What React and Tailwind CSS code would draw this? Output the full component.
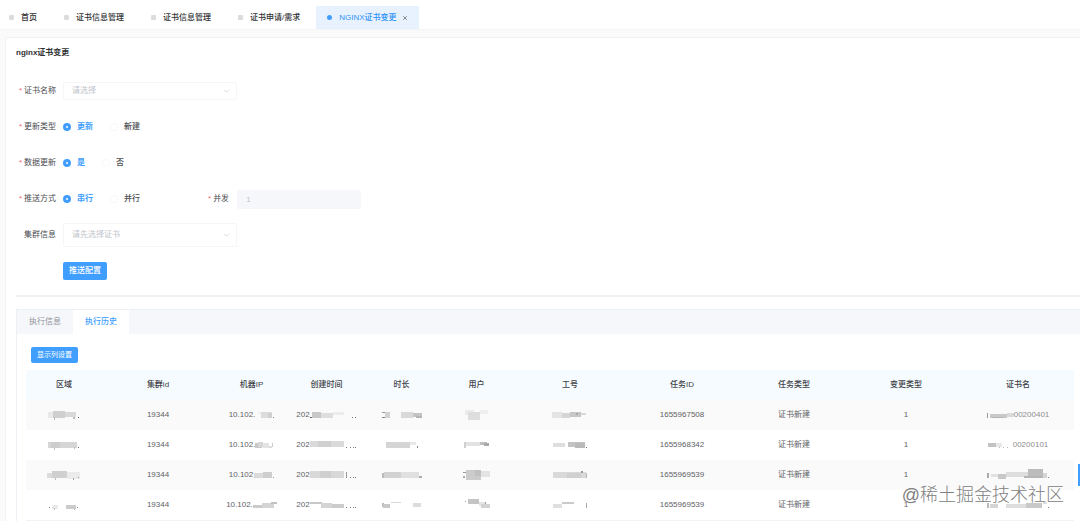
import React, { useState } from 'react';
import clsx from 'clsx';
import { ChevronDown, X } from 'lucide-react';

const pageTabs = [
  { id: 1, title: '首页' },
  { id: 2, title: '证书信息管理' },
  { id: 3, title: '证书信息管理' },
  { id: 4, title: '证书申请/需求' },
  { id: 5, title: 'NGINX证书变更' },
];

const columns = [
  { key: 'region', title: '区域', width: 'w-[76px]' },
  { key: 'clusterId', title: '集群id' },
  { key: 'ip', title: '机器IP', width: 'w-[75px]' },
  { key: 'createdAt', title: '创建时间', width: 'w-[75px]' },
  { key: 'duration', title: '时长', width: 'w-[75px]' },
  { key: 'user', title: '用户', width: 'w-[75px]' },
  { key: 'jobNo', title: '工号' },
  { key: 'taskId', title: '任务ID' },
  { key: 'taskType', title: '任务类型' },
  { key: 'changeType', title: '变更类型' },
  { key: 'certName', title: '证书名' },
];

// masked cells: each block is [x, y, width, height, fill]
const rows = [
  {
    region: { w: 32, blocks: [[0, 3, 5, 6, '#e9e9e9'], [5, 2, 12, 7, '#cfcfcf'], [17, 3, 11, 5, '#d8d8d8'], [6, 8, 1, 3, '#bbb'], [25, 8, 2, 2, '#bbb'], [30, 8, 1, 1, '#666']] },
    clusterId: '19344',
    ip: { text: '10.102.', w: 19, blocks: [[3, 3, 3, 2, '#eee'], [6, 3, 11, 6, '#dcdcdc'], [13, 4, 4, 5, '#d0d0d0'], [18, 8, 1, 1, '#888']] },
    createdAt: { text: '202', w: 47, blocks: [[0, 8, 3, 1, '#666'], [2, 3, 9, 6, '#c8c8c8'], [11, 4, 12, 5, '#dedede'], [23, 3, 11, 3, '#ececec'], [42, 8, 1, 1, '#777'], [45, 8, 1, 1, '#777']] },
    duration: { w: 40, blocks: [[0, 3, 3, 1, '#999'], [0, 8, 5, 1, '#888'], [3, 3, 5, 6, '#d2d2d2'], [19, 3, 12, 6, '#d9d9d9'], [31, 4, 9, 4, '#c4c4c4'], [34, 7, 6, 2, '#b5b5b5']] },
    user: { w: 28, blocks: [[2, 1, 9, 5, '#ebebeb'], [5, 3, 12, 8, '#dedede'], [17, 1, 8, 4, '#efefef']] },
    jobNo: { w: 36, blocks: [[0, 3, 10, 6, '#e4e4e4'], [10, 4, 8, 5, '#d5d5d5'], [18, 3, 11, 5, '#c6c6c6'], [24, 4, 2, 2, '#aaa'], [29, 4, 5, 2, '#d8d8d8']] },
    taskId: '1655967508',
    certName: { w: 27, blocks: [[0, 4, 1, 5, '#999'], [3, 5, 17, 4, '#c9c9c9'], [5, 8, 12, 1, '#b5b5b5'], [20, 4, 7, 4, '#dadada']], tail: '00200401' },
  },
  {
    region: { w: 32, blocks: [[0, 3, 29, 6, '#d6d6d6'], [3, 3, 9, 6, '#cdcdcd'], [6, 9, 1, 2, '#bbb'], [26, 8, 1, 2, '#bbb'], [30, 8, 1, 1, '#666']] },
    clusterId: '19344',
    ip: { text: '10.102.', w: 19, blocks: [[0, 4, 7, 5, '#c8c8c8'], [3, 3, 5, 5, '#d6d6d6'], [8, 4, 6, 5, '#e4e4e4'], [14, 7, 3, 2, '#ddd'], [17, 4, 1, 4, '#ccc']] },
    createdAt: { text: '202', w: 47, blocks: [[0, 2, 34, 6, '#dadada'], [8, 2, 13, 6, '#d0d0d0'], [36, 8, 1, 1, '#777'], [40, 8, 1, 1, '#777'], [43, 8, 1, 1, '#777'], [45, 8, 1, 1, '#777']] },
    duration: { w: 32, blocks: [[0, 3, 24, 6, '#d5d5d5'], [24, 3, 6, 3, '#e8e8e8'], [31, 7, 1, 2, '#888']] },
    user: { w: 28, blocks: [[1, 3, 2, 6, '#d0d0d0'], [3, 3, 14, 4, '#e2e2e2'], [17, 3, 7, 3, '#bdbdbd'], [21, 4, 5, 3, '#a8a8a8']] },
    jobNo: { w: 35, blocks: [[0, 4, 12, 4, '#dedede'], [15, 3, 17, 5, '#c4c4c4'], [22, 4, 10, 5, '#bababa'], [33, 8, 1, 1, '#777']] },
    taskId: '1655968342',
    certName: { w: 25, blocks: [[0, 4, 8, 4, '#c2c2c2'], [8, 4, 6, 4, '#e8e8e8'], [11, 8, 1, 1, '#bbb'], [15, 8, 1, 1, '#bbb'], [19, 8, 1, 1, '#bbb']], tail: '00200101' },
  },
  {
    region: { w: 34, blocks: [[0, 4, 7, 5, '#dcdcdc'], [5, 2, 15, 7, '#d0d0d0'], [20, 3, 13, 7, '#ebebeb'], [8, 9, 1, 2, '#bbb'], [26, 9, 1, 2, '#aaa'], [31, 8, 1, 1, '#999']] },
    clusterId: '19344',
    ip: { text: '10.102', w: 21, blocks: [[1, 4, 12, 5, '#dadada'], [10, 3, 9, 6, '#cecece'], [20, 8, 1, 1, '#999']] },
    createdAt: { text: '202', w: 47, blocks: [[0, 2, 34, 7, '#d8d8d8'], [10, 2, 11, 7, '#cfcfcf'], [36, 3, 1, 6, '#999'], [40, 8, 1, 1, '#777'], [43, 8, 1, 1, '#777'], [45, 8, 1, 1, '#777']] },
    duration: { w: 40, blocks: [[0, 4, 2, 5, '#bbb'], [2, 3, 17, 6, '#d2d2d2'], [19, 3, 18, 6, '#e0e0e0'], [37, 7, 3, 2, '#aaa']] },
    user: { w: 28, blocks: [[0, 3, 3, 1, '#999'], [0, 7, 2, 2, '#aaa'], [3, 1, 15, 10, '#cbcbcb'], [12, 1, 6, 6, '#c0c0c0'], [18, 2, 9, 6, '#e3e3e3']] },
    jobNo: { w: 35, blocks: [[0, 3, 33, 6, '#d9d9d9'], [14, 4, 14, 5, '#d0d0d0'], [28, 2, 2, 2, '#999'], [33, 4, 1, 5, '#bbb']] },
    taskId: '1655969539',
    certName: { w: 62, blocks: [[0, 4, 2, 5, '#aaa'], [4, 5, 7, 3, '#e2e2e2'], [11, 5, 8, 5, '#c8c8c8'], [19, 3, 22, 5, '#dddddd'], [41, 0, 15, 7, '#bcbcbc'], [37, 7, 19, 2, '#b5b5b5'], [56, 4, 4, 5, '#d5d5d5'], [61, 8, 1, 1, '#888']] },
  },
  {
    region: { w: 30, blocks: [[0, 8, 1, 1, '#888'], [3, 6, 6, 4, '#eaeaea'], [5, 9, 1, 2, '#bbb'], [17, 6, 10, 4, '#cccccc'], [25, 9, 1, 2, '#bbb'], [28, 8, 1, 1, '#888']] },
    clusterId: '19344',
    ip: { text: '10.102.', w: 24, blocks: [[0, 6, 10, 3, '#cbcbcb'], [9, 4, 12, 5, '#d4d4d4'], [18, 3, 6, 2, '#c2c2c2']] },
    createdAt: { text: '202', w: 47, blocks: [[0, 3, 12, 2, '#c8c8c8'], [11, 4, 11, 5, '#d4d4d4'], [22, 5, 12, 4, '#cccccc'], [36, 8, 1, 1, '#777'], [40, 8, 1, 1, '#777'], [43, 8, 1, 1, '#777'], [45, 8, 1, 1, '#777']] },
    duration: { w: 40, blocks: [[0, 4, 2, 4, '#bbb'], [1, 5, 7, 4, '#c8c8c8'], [9, 3, 10, 1, '#d8d8d8'], [31, 4, 8, 4, '#dcdcdc']] },
    user: { w: 28, blocks: [[2, 2, 1, 1, '#aaa'], [5, 0, 11, 5, '#c4c4c4'], [16, 3, 6, 4, '#e4e4e4'], [18, 5, 9, 4, '#d2d2d2'], [22, 3, 1, 2, '#999']] },
    jobNo: { w: 35, blocks: [[0, 5, 9, 4, '#dfdfdf'], [9, 3, 12, 2, '#c9c9c9'], [33, 4, 1, 5, '#aaa']] },
    taskId: '1655969539',
    certName: { w: 62, blocks: [[0, 4, 2, 5, '#bbb'], [3, 5, 8, 4, '#d5d5d5'], [19, 5, 20, 4, '#dedede'], [39, 4, 16, 5, '#c9c9c9'], [56, 3, 4, 2, '#ddd'], [61, 8, 1, 1, '#888']] },
  },
].map((row) => ({ ...row, taskType: '证书新建', changeType: '1' }));

function MaskedCell({ cell }) {
  return (
    <span className="inline-flex items-center align-middle">
      {cell.text}
      <svg width={cell.w} height="12" className="shrink-0" aria-hidden="true">
        {cell.blocks.map(([x, y, w, h, fill], i) => (
          <rect key={i} x={x} y={y} width={w} height={h} fill={fill} />
        ))}
      </svg>
      {cell.tail && <span className="text-[#8f8f8f]">{cell.tail}</span>}
    </span>
  );
}

function FormLabel({ children, required, htmlFor, className }) {
  return (
    <label htmlFor={htmlFor} className={clsx('text-right text-[#4b4d52]', className)}>
      {required && <span className="mr-[2px] text-[#f56c6c]">*</span>}
      {children}
    </label>
  );
}

function SelectBox({ id, placeholder, className }) {
  return (
    <div className="relative w-[174px]">
      <select
        id={id}
        className={clsx(
          'block w-full appearance-none rounded-[2px] border border-[#f6f6f7] bg-white pl-2 text-[#c0c4cc] outline-none',
          className
        )}
      >
        <option>{placeholder}</option>
      </select>
      <ChevronDown size={9} strokeWidth={2} className="pointer-events-none absolute top-1/2 right-[6px] -translate-y-1/2 text-[#cdd0d6]" />
    </div>
  );
}

function RadioRow({ id, label, options }) {
  const [value, setValue] = useState(options[0]);

  return (
    <div className="flex h-6 items-center">
      <FormLabel required htmlFor={id} className="mr-[7px] w-10">{label}</FormLabel>
      <div className="flex gap-[17px]">
        {options.map((option, index) => (
          <label key={option} className={clsx('flex items-center gap-[6px]', value === option ? 'font-bold text-[#409eff]' : 'font-medium text-[#4b4d52]')}>
            <input
              id={index === 0 ? id : undefined}
              type="radio"
              name={id}
              checked={value === option}
              onChange={() => setValue(option)}
              className="size-2 appearance-none rounded-full border border-[#f8f8f9] bg-white checked:border-[3px] checked:border-[#409eff]"
            />
            {option}
          </label>
        ))}
      </div>
    </div>
  );
}

export default function App() {
  const [activeTab, setActiveTab] = useState(5);
  const [panel, setPanel] = useState('执行历史');

  return (
    <div className="relative flex h-screen flex-col overflow-hidden bg-[#fafafa] font-['Liberation_Sans','Noto_Sans_CJK_SC',sans-serif] text-[8px] leading-3 text-[#606266]">
      <nav className="flex h-[30px] shrink-0 items-end border-b border-[#f3f4f5] bg-white">
        <div className="-ml-[2px] flex gap-[5px]">
          {pageTabs.map((tab) => {
            const active = tab.id === activeTab;
            return (
              <button
                key={tab.id}
                type="button"
                onClick={() => setActiveTab(tab.id)}
                className={clsx(
                  'flex h-[23px] items-center px-[11px] font-medium whitespace-nowrap',
                  active ? 'bg-[#e8f2fe] text-[#2f92f6]' : 'text-[#303133]'
                )}
              >
                <span className={clsx('mr-[7px] size-[5px]', active ? 'rounded-full bg-[#409eff]' : 'rounded-[1px] bg-[#dcdcdc]')} />
                {tab.title}
                {active && <X size={6} strokeWidth={3} className="ml-[5px] text-[#666]" />}
              </button>
            );
          })}
        </div>
      </nav>

      <main className="mt-[7px] ml-[5px] flex-1 rounded-tl-[3px] border-t border-l border-[#f2f2f2] bg-white pl-[10px]">
        <section className="border-b-2 border-[#efefef] pb-3">
          <h1 className="pt-[9px] pb-[20px] font-bold text-[#303133]">nginx证书变更</h1>

          <form className="flex flex-col gap-3" onSubmit={(e) => e.preventDefault()}>
            <div className="flex h-6 items-center">
              <FormLabel required htmlFor="cert" className="mr-[7px] w-10">证书名称</FormLabel>
              <SelectBox id="cert" placeholder="请选择" className="h-[18px]" />
            </div>
            <RadioRow id="update-type" label="更新类型" options={['更新', '新建']} />
            <RadioRow id="data-update" label="数据更新" options={['是', '否']} />
            <div className="flex">
              <div className="w-[192px]">
                <RadioRow id="push-mode" label="推送方式" options={['串行', '并行']} />
              </div>
              <div className="flex items-center">
                <FormLabel required htmlFor="parallel" className="mr-2">并发</FormLabel>
                <input
                  id="parallel"
                  defaultValue="1"
                  disabled
                  className="h-[19px] w-[124px] rounded-[2px] bg-[#f5f7fa] px-[9px] text-[#c0c4cc]"
                />
              </div>
            </div>
            <div className="flex h-6 items-center">
              <FormLabel htmlFor="cluster" className="mr-[7px] w-10">集群信息</FormLabel>
              <SelectBox id="cluster" placeholder="请先选择证书" className="h-6" />
            </div>
            <div className="flex h-6 items-center pl-[47px]">
              <button type="submit" className="h-[18px] w-11 rounded-[2px] bg-[#409eff] font-medium text-white">
                推送配置
              </button>
            </div>
          </form>
        </section>

        <section className="mt-3 border-t border-l border-[#eceff3]">
          <div className="flex h-6 bg-[#f5f7fa]" role="tablist">
            {['执行信息', '执行历史'].map((name) => (
              <button
                key={name}
                type="button"
                role="tab"
                aria-selected={panel === name}
                onClick={() => setPanel(name)}
                className={clsx('h-full w-14', panel === name ? 'bg-white font-medium text-[#409eff]' : 'text-[#909399]')}
              >
                {name}
              </button>
            ))}
          </div>

          <div className="pt-[13px] pr-[6px] pl-[9px]">
            <button type="button" className="ml-[5px] block h-4 w-[47px] rounded-[2px] bg-[#409eff] text-[7px] text-white">
              显示列设置
            </button>

            <table className="mt-[7px] w-full table-fixed border-b border-[#f2f3f5] text-center">
              <thead>
                <tr className="h-[30px] bg-[#f6fbff]">
                  {columns.map((col) => (
                    <th key={col.key} scope="col" className={clsx('p-0 font-medium text-[#3f4247]', col.width)}>
                      {col.title}
                    </th>
                  ))}
                </tr>
              </thead>
              <tbody>
                {rows.map((row, index) => (
                  <tr key={index} className="h-[30px] odd:bg-[#fafafa]">
                    {columns.map((col) => (
                      <td key={col.key} className="p-0 whitespace-nowrap">
                        {typeof row[col.key] === 'string' ? row[col.key] : <MaskedCell cell={row[col.key]} />}
                      </td>
                    ))}
                  </tr>
                ))}
              </tbody>
            </table>
          </div>
        </section>
      </main>

      {/* drawer handle on the right edge */}
      <button type="button" aria-label="设置" className="absolute right-0 bottom-[35px] h-[22px] w-[2px] bg-[#409eff]" />
      <div className="pointer-events-none absolute right-4 bottom-[14px] text-[18px] leading-6 font-light text-[#808080] text-shadow-[0_0_1px_#fff]">
        @稀土掘金技术社区
      </div>
    </div>
  );
}
